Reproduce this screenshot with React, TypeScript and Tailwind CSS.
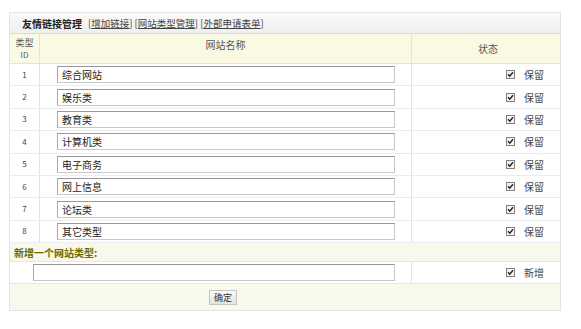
import React from "react";

const types = ["综合网站", "娱乐类", "教育类", "计算机类", "电子商务", "网上信息", "论坛类", "其它类型"];

function Check() {
  return (
    <svg width="9" height="9" viewBox="0 0 9 9" className="shrink-0">
      <rect x="0.5" y="0.5" width="8" height="8" fill="#f4f4f4" stroke="#808080" />
      <path d="M2 4.2 L3.8 6.2 L7 2.3" fill="none" stroke="#222" strokeWidth="1.4" />
    </svg>
  );
}

function Status({ label }: { label: string }) {
  return (
    <div className="flex items-center justify-end gap-[9px] pr-[16px]">
      <Check />
      <span className="text-[10px] text-[#444]">{label}</span>
    </div>
  );
}

export default function App() {
  return (
    <div
      className="w-[581px] h-[329px] bg-white pt-[12px] pl-[9px]"
      style={{ fontFamily: '"Noto Sans CJK SC", "DejaVu Sans", sans-serif' }}
    >
      <div className="w-[552px] border border-[#e3e3e3] text-[#333]">
        {/* title bar */}
        <div className="h-[21px] flex items-center pl-[12px] gap-[6px] bg-gradient-to-b from-[#fafafa] to-[#efefef] border-b border-[#dcdcdc] text-[9.5px]">
          <span className="font-bold text-[#222] text-[10px]">友情链接管理</span>
          <span className="text-[#444]">
            [<span className="underline">增加链接</span>] [<span className="underline">网站类型管理</span>] [<span className="underline">外部申请表单</span>]
          </span>
        </div>

        {/* header */}
        <div className="grid grid-cols-[30px_372px_1fr] h-[30px] bg-[#fafae4] border-b border-[#e2e2e2] text-[10px] text-[#555]">
          <div className="flex flex-col items-center justify-center border-r border-[#e2e2e2]">
            <span className="text-[9px] leading-[12px]">类型</span>
            <span className="text-[8px] leading-[12px]">ID</span>
          </div>
          <div className="flex items-center justify-center border-r border-[#e2e2e2] pb-[8px]">网站名称</div>
          <div className="flex items-center justify-center pl-[4px]">状态</div>
        </div>

        {/* rows */}
        {types.map((t, i) => (
          <div key={t} className="grid grid-cols-[30px_372px_1fr] h-[22.4px] border-b border-[#ececec] bg-white">
            <div className="flex items-center justify-center text-[8px] text-[#444] border-r border-[#e2e2e2]">{i + 1}</div>
            <div className="flex items-center pl-[17px] border-r border-[#e2e2e2]">
              <div className="w-[338px] h-[17px] flex items-center pl-[4px] border border-[#c8c8c8] border-t-[#999] border-l-[#aaa] text-[10px] text-[#222]">
                {t}
              </div>
            </div>
            <Status label="保留" />
          </div>
        ))}

        {/* new type */}
        <div className="h-[19px] flex items-center pl-[4px] bg-[#f8f9ea] border-b border-[#e6e6e6] text-[10px] font-bold text-[#6b6b00]">
          新增一个网站类型:
        </div>
        <div className="grid grid-cols-[402px_1fr] h-[22px] border-b border-[#e6e6e6] bg-white">
          <div className="flex items-center pl-[23px] border-r border-[#e2e2e2]">
            <div className="w-[362px] h-[17px] border border-[#c8c8c8] border-t-[#999] border-l-[#aaa]" />
          </div>
          <Status label="新增" />
        </div>
        <div className="h-[26px] flex items-center justify-center bg-[#f8f9ea] pr-[124px]">
          <button className="h-[15px] w-[28px] text-[9px] leading-none text-[#333] border border-[#c4c4c4] bg-gradient-to-b from-[#fbfbfb] to-[#e2e2e2]">
            确定
          </button>
        </div>
      </div>
    </div>
  );
}
